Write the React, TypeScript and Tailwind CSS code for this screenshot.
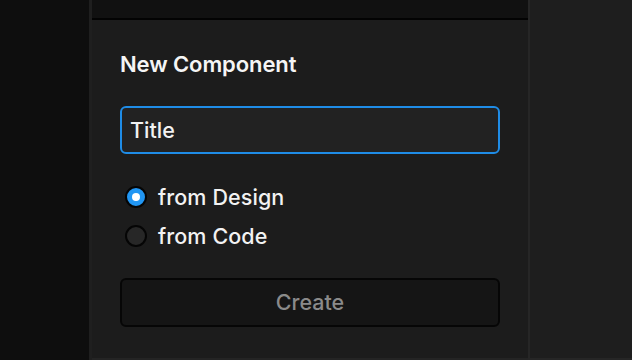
export default function App() {
  return (
    <div className="flex h-[360px] w-[632px] overflow-hidden bg-[#0e0e0e] font-['Inter','Roboto',sans-serif] text-white">
      <div className="w-[89px] shrink-0 bg-[#0e0e0e]" />
      <div className="w-[3px] shrink-0 bg-[#1f1f1f]" />
      <div className="flex w-[436px] shrink-0 flex-col border-b-2 border-[#242424] bg-[#1c1c1c]">
        <div className="h-[18px] shrink-0 bg-[#111111]" />
        <div className="h-[2px] shrink-0 bg-[#030303]" />
        <div className="flex flex-col px-[28px] pt-[32px]">
          <h2 className="text-[22px] font-semibold leading-[24px] tracking-[-0.1px] text-[#f5f5f5]">New Component</h2>
          <div className="mt-[30px] flex h-[48px] w-[380px] items-center rounded-[6px] border-2 border-[#1f8ce6] bg-[#222222] px-[8px]">
            <span className="text-[21.5px] font-medium text-[#f2f2f2]">Title</span>
          </div>
          <div className="mt-[32px] flex flex-col gap-[17px]">
            <label className="ml-[5px] flex items-center gap-[11px]">
              <span className="flex h-[22px] w-[22px] items-center justify-center rounded-full border-[2px] border-[#050505] bg-[#2196f3]">
                <span className="h-[8px] w-[8px] rounded-full bg-white" />
              </span>
              <span className="text-[21.5px] font-medium leading-[22px] tracking-[0.1px] text-[#f2f2f2]">from Design</span>
            </label>
            <label className="ml-[5px] flex items-center gap-[11px]">
              <span className="h-[22px] w-[22px] rounded-full border-[2px] border-[#050505] bg-[#272727]" />
              <span className="text-[21.5px] font-medium leading-[22px] tracking-[0.1px] text-[#f2f2f2]">from Code</span>
            </label>
          </div>
          <button className="mt-[31px] flex h-[49px] w-[380px] items-center justify-center rounded-[6px] border-2 border-[#060606] bg-[#151515] text-[21.5px] font-medium text-[#8a8a8a]">
            Create
          </button>
        </div>
      </div>
      <div className="w-[2px] shrink-0 bg-[#262626]" />
      <div className="flex-1 border-b-2 border-[#262626] bg-[#1e1e1e]" />
    </div>
  );
}
